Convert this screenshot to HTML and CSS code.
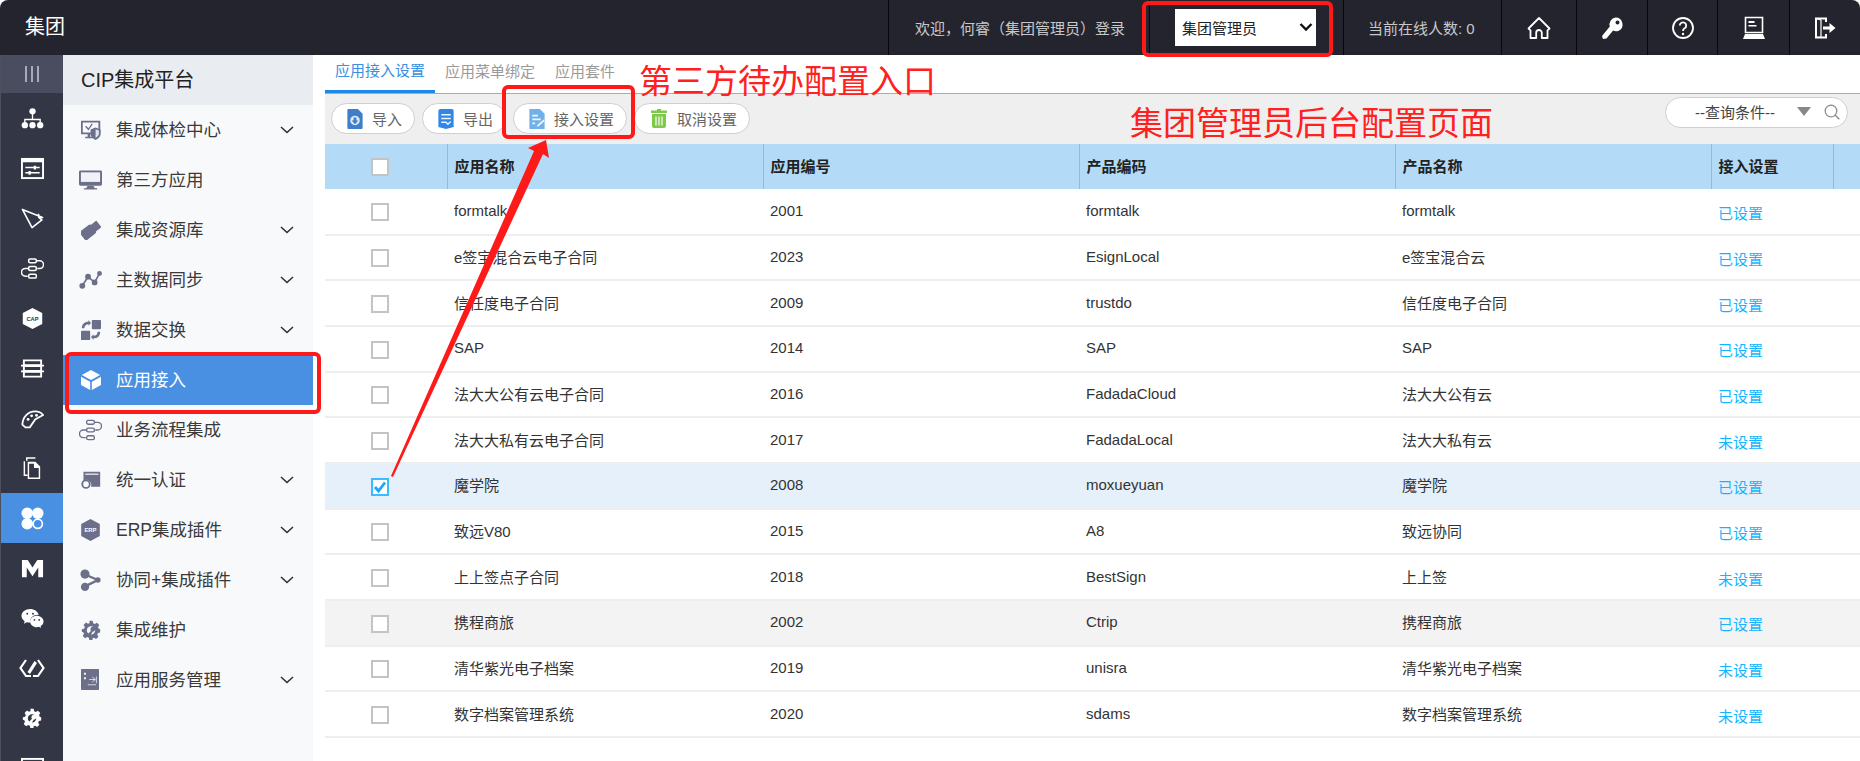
FILE: index.html
```html
<!DOCTYPE html>
<html lang="zh-CN">
<head>
<meta charset="utf-8">
<title>CIP集成平台</title>
<link rel="stylesheet" href="styles.css">
</head>
<body>
<div class="app">
  <header class="top">
    <div class="brand">集团</div>
    <div class="seg seg-welcome">欢迎，何睿（集团管理员）登录</div>
    <div class="seg seg-select">
      <div class="select"><span>集团管理员</span>
        <svg class="sel-arrow" viewBox="0 0 14 10"><path d="M1.500 2 7 7.500 12.500 2" fill="none" stroke="#111" stroke-width="2.400"/></svg>
      </div>
    </div>
    <div class="seg seg-online">当前在线人数: 0</div>
    <div class="seg seg-icon w75"><svg viewBox="0 0 24 24" class="ti"><path d="M1.500 12.500 12 2l10.500 10.500-2 1.800v7.700h-5.700v-5.200a2.800 2.800 0 0 0-5.600 0V22H3.500v-7.700z" fill="none" stroke="#fff" stroke-width="1.800" stroke-linejoin="round"/></svg></div>
    <div class="seg seg-icon w71"><svg viewBox="0 0 24 24" class="ti"><path d="M15.500 1.500a7 7 0 0 1 2.600 13.500 7 7 0 0 1-5-.4L6.500 22.500l-3.500.5-1-3 7.800-9.500a7 7 0 0 1 5.700-9zm2 3a2 2 0 1 0 0 4 2 2 0 0 0 0-4z" fill="#fff" fill-rule="evenodd"/></svg></div>
    <div class="seg seg-icon w70"><svg viewBox="0 0 24 24" class="ti"><circle cx="12" cy="12" r="10" fill="none" stroke="#fff" stroke-width="1.800"/><path d="M8.800 9.500a3.200 3.200 0 1 1 4.800 2.800c-1.100.7-1.600 1.200-1.600 2.700" fill="none" stroke="#fff" stroke-width="1.800"/><circle cx="12" cy="18" r="1.200" fill="#fff"/></svg></div>
    <div class="seg seg-icon w72"><svg viewBox="0 0 24 24" class="ti"><path d="M3.500 1.500h17v15h-17z" fill="none" stroke="#fff" stroke-width="1.600"/><path d="M6.500 5h6v2h-6zM6.500 9h8v1.600h-8z" fill="#fff"/><path d="M3 18h18l2 5H1z" fill="#fff"/></svg></div>
    <div class="seg seg-icon w71"><svg viewBox="0 0 24 24" class="ti"><path d="M13 6V2.500H3v19h10V18" fill="none" stroke="#fff" stroke-width="2"/><path d="M3 2.500 8 4v17l-5 .5" fill="none" stroke="#fff" stroke-width="1.200"/><path d="M10 10.500h6.500V7l6 5-6 5v-3.500H10z" fill="#fff"/></svg></div>
  </header>

  <div class="main">
    <nav class="rail">
      <div class="rail-toggle"><svg viewBox="0 0 16 16" class="ri-small"><path d="M2 0v16M8 0v16M14 0v16" stroke="#d9dcec" stroke-width="1.300"/></svg></div>
      <div class="rail-item"><svg viewBox="0 0 24 22" class="ri"><circle cx="12" cy="3.500" r="3.300" fill="#fff"/><path d="M12 6v6M4 15v-3h16v3" fill="none" stroke="#fff" stroke-width="1.400"/><circle cx="4" cy="18" r="3.300" fill="#fff"/><circle cx="12" cy="18" r="3.300" fill="#fff"/><circle cx="20" cy="18" r="3.300" fill="#fff"/></svg></div>
      <div class="rail-item"><svg viewBox="0 0 24 22" class="ri"><rect x="1" y="1" width="22" height="20" fill="none" stroke="#fff" stroke-width="2"/><rect x="1" y="1" width="22" height="3.500" fill="#fff"/><path d="M4.500 10h15M4.500 15.500h15" stroke="#fff" stroke-width="1.600"/><path d="M14.500 8v4M9 13.500v4" stroke="#fff" stroke-width="2.400"/></svg></div>
      <div class="rail-item"><svg viewBox="0 0 24 24" class="ri"><path d="M1.500 2.500 22.500 11l-4-.2 3.300 2.700L11.500 21.500z" fill="none" stroke="#fff" stroke-width="1.700" stroke-linejoin="round"/><path d="M18 7l1 4" fill="none" stroke="#fff" stroke-width="1.700"/></svg></div>
      <div class="rail-item"><svg viewBox="0 0 24 22" class="ri"><rect x="8" y="1" width="8" height="4" rx="1.500" fill="none" stroke="#fff" stroke-width="1.600"/><rect x="8" y="9" width="8" height="4" rx="1.500" fill="none" stroke="#fff" stroke-width="1.600"/><rect x="8" y="17" width="8" height="4" rx="1.500" fill="none" stroke="#fff" stroke-width="1.600"/><path d="M16 3h3.500a4 4 0 0 1 0 8H17M8 11H4.500a4 4 0 0 0 0 8H7" fill="none" stroke="#fff" stroke-width="1.600"/></svg></div>
      <div class="rail-item"><svg viewBox="0 0 24 26" class="ri"><path d="M12 1 23 6.800v12.400L12 25 1 19.200V6.800z" fill="#fff"/><text x="12" y="15.500" text-anchor="middle" class="cap">CAP</text></svg></div>
      <div class="rail-item"><svg viewBox="0 0 24 22" class="ri"><path d="M3 2.500h18v5H3zM3 8.500h18v5H3zM3 14.500h18v5H3z" fill="none" stroke="#fff" stroke-width="2"/><path d="M0 8h24M0 14h24" stroke="#fff" stroke-width="1.600"/></svg></div>
      <div class="rail-item"><svg viewBox="0 0 26 22" class="ri"><path d="M1.500 18C2 9 8 3 16 3c4 0 7 1.500 9 4l-9 5-6 9H5z" fill="none" stroke="#fff" stroke-width="2"/><circle cx="8" cy="12" r="1.600" fill="#fff"/><circle cx="12" cy="8" r="1.600" fill="#fff"/><circle cx="17.500" cy="7.500" r="1.600" fill="#fff"/></svg></div>
      <div class="rail-item"><svg viewBox="0 0 20 24" class="ri"><path d="M4 4V1h9" fill="none" stroke="#fff" stroke-width="1.500"/><path d="M1.500 4.500V19H5" fill="none" stroke="#fff" stroke-width="1.500"/><path d="M5 5h8l5 5v13H5z" fill="#fff"/><path d="M6.500 7h5v4.500h5V21.500h-10z" fill="#333644"/></svg></div>
      <div class="rail-item is-active"><svg viewBox="0 0 24 24" class="ri"><circle cx="6.500" cy="6.500" r="6" fill="#fff"/><circle cx="17.500" cy="6.500" r="6" fill="#fff"/><circle cx="6.500" cy="17.500" r="6" fill="#fff"/><circle cx="17.500" cy="17.500" r="4.800" fill="none" stroke="#fff" stroke-width="1.800"/></svg></div>
      <div class="rail-item"><svg viewBox="0 0 24 20" class="ri"><path d="M1 1h6l5 8 5-8h6v18h-5V9l-6 9-6-9v10H1z" fill="#fff"/></svg></div>
      <div class="rail-item"><svg viewBox="0 0 24 22" class="ri"><path d="M9.500 1C4.500 1 .5 4.200.5 8.200c0 2.300 1.300 4.300 3.300 5.600l-.8 2.600 3-1.500c1 .3 2 .4 3 .4h.8a6 6 0 0 1-.2-1.500C9.600 10 13 7 17.800 7h.7C17.500 3.500 13.800 1 9.500 1z" fill="#fff"/><path d="M23.500 14c0-3.300-3.300-6-7-6s-7 2.700-7 6 3.300 6 7 6c.8 0 1.500-.1 2.200-.3l2.300 1.300-.6-2.100c1.900-1.200 3.100-2.900 3.100-4.900z" fill="#fff"/><circle cx="6.500" cy="6" r="1" fill="#333644"/><circle cx="12.500" cy="6" r="1" fill="#333644"/><circle cx="14" cy="12.500" r=".9" fill="#333644"/><circle cx="19" cy="12.500" r=".9" fill="#333644"/></svg></div>
      <div class="rail-item"><svg viewBox="0 0 26 20" class="ri-code"><path d="M7 2 1.500 10 7 18h5M19 2l5.500 8-5.500 8h-5" fill="none" stroke="#fff" stroke-width="2.200"/><path d="M15.500 3 8.500 14l2.500 2 7-11z" fill="#fff"/></svg></div>
      <div class="rail-item"><svg viewBox="0 0 24 24" class="ri-gear"><use href="#gear-w"/></svg></div>
      <div class="rail-item"><svg viewBox="0 0 24 22" class="ri"><rect x="1" y="1" width="22" height="20" fill="none" stroke="#fff" stroke-width="2"/></svg></div>
    </nav>

    <aside class="panel">
      <h1 class="panel-title">CIP集成平台</h1>
      <ul class="menu">
        <li class="menu-item"><svg viewBox="0 0 24 24" class="mi"><path d="M1 2h21v14H1z" fill="none" stroke="#6b6f8a" stroke-width="2.200"/><path d="M5 20h9v2H5zM8 16h3v5H8z" fill="#6b6f8a"/><path d="M6 7l3 3 4-6 1 1-5 7.500L5 8z" fill="#6b6f8a"/><path d="M17.500 9l6 2.300v5.200c0 3.800-3 6-6 7.500-3-1.500-6-3.700-6-7.500v-5.200z" fill="#6b6f8a"/><path d="M17.500 11.200v10.300c2-1.200 4-2.800 4-5.200v-3.600z" fill="#dce4f2"/></svg><span>集成体检中心</span><svg viewBox="0 0 14 8" class="chev"><path d="M1 1l6 5.500L13 1" fill="none" stroke="#2d3140" stroke-width="1.600"/></svg></li>
        <li class="menu-item"><svg viewBox="0 0 24 20" class="mi mi-wide"><path d="M1.500 0h21A1.500 1.500 0 0 1 24 1.500v13a1.500 1.500 0 0 1-1.500 1.500h-21A1.500 1.500 0 0 1 0 14.500v-13A1.500 1.500 0 0 1 1.500 0z" fill="#6b6f8a"/><path d="M2 2h20v10H2z" fill="#f0f2f8"/><path d="M9 16h6l1.500 2.500H19V20H5v-1.500h2.500z" fill="#6b6f8a"/></svg><span>第三方应用</span></li>
        <li class="menu-item"><svg viewBox="0 0 24 24" class="mi"><g transform="rotate(-38 12 12)" fill="#6b6f8a"><rect x="-1" y="5.500" width="17" height="13" rx="3"/><rect x="15" y="7" width="9" height="10" rx="1"/></g></svg><span>集成资源库</span><svg viewBox="0 0 14 8" class="chev"><path d="M1 1l6 5.500L13 1" fill="none" stroke="#2d3140" stroke-width="1.600"/></svg></li>
        <li class="menu-item"><svg viewBox="0 0 28 22" class="mi mi-wide"><path d="M4 18l7-11 8 7 6-11" fill="none" stroke="#6b6f8a" stroke-width="2"/><circle cx="4" cy="18" r="3.500" fill="#6b6f8a"/><circle cx="11" cy="7" r="3.500" fill="#6b6f8a"/><circle cx="19" cy="14" r="3.500" fill="#6b6f8a"/><circle cx="25" cy="3" r="3" fill="#6b6f8a"/></svg><span>主数据同步</span><svg viewBox="0 0 14 8" class="chev"><path d="M1 1l6 5.500L13 1" fill="none" stroke="#2d3140" stroke-width="1.600"/></svg></li>
        <li class="menu-item"><svg viewBox="0 0 24 24" class="mi"><rect x="13" y="0" width="11" height="11" rx="1" fill="#6b6f8a"/><rect x="0" y="13" width="11" height="11" rx="1" fill="#6b6f8a"/><path d="M1 10c0-5 3-8 8-8V0l3 3.500L9 7V5c-3 0-5 2-5 5z" fill="#6b6f8a"/><path d="M23 14c0 5-3 8-8 8v2l-3-3.500 3-3.500v2c3 0 5-2 5-5z" fill="#6b6f8a"/></svg><span>数据交换</span><svg viewBox="0 0 14 8" class="chev"><path d="M1 1l6 5.500L13 1" fill="none" stroke="#2d3140" stroke-width="1.600"/></svg></li>
        <li class="menu-item is-active"><svg viewBox="0 0 24 24" class="mi"><path d="M12 0 23 6 12 12 1 6z" fill="#fff"/><path d="M0 8l11 6v10L0 18z" fill="#fff"/><path d="M24 8l-11 6v10l11-6z" fill="#fff"/></svg><span>应用接入</span></li>
        <li class="menu-item"><svg viewBox="0 0 24 22" class="mi mi-wide"><rect x="8" y="1" width="8" height="4" rx="1.500" fill="none" stroke="#6b6f8a" stroke-width="1.400"/><rect x="8" y="9" width="8" height="4" rx="1.500" fill="none" stroke="#6b6f8a" stroke-width="1.400"/><rect x="8" y="17" width="8" height="4" rx="1.500" fill="none" stroke="#6b6f8a" stroke-width="1.400"/><path d="M16 3h3.500a4 4 0 0 1 0 8H17M8 11H4.500a4 4 0 0 0 0 8H7" fill="none" stroke="#6b6f8a" stroke-width="1.400"/></svg><span>业务流程集成</span></li>
        <li class="menu-item"><svg viewBox="0 0 24 22" class="mi"><path d="M3 1h20v18H12a6 6 0 0 0-9-7z" fill="#6b6f8a"/><path d="M5 4h16" stroke="#f8f9fb" stroke-width="1.400"/><circle cx="6" cy="16" r="4.500" fill="none" stroke="#6b6f8a" stroke-width="2.200"/></svg><span>统一认证</span><svg viewBox="0 0 14 8" class="chev"><path d="M1 1l6 5.500L13 1" fill="none" stroke="#2d3140" stroke-width="1.600"/></svg></li>
        <li class="menu-item"><svg viewBox="0 0 24 26" class="mi mi-wide"><path d="M12 0 23 6v14l-11 6L1 20V6z" fill="#6b6f8a"/><text x="12" y="15.500" text-anchor="middle" class="erp">ERP</text></svg><span>ERP集成插件</span><svg viewBox="0 0 14 8" class="chev"><path d="M1 1l6 5.500L13 1" fill="none" stroke="#2d3140" stroke-width="1.600"/></svg></li>
        <li class="menu-item"><svg viewBox="0 0 24 24" class="mi mi-wide"><path d="M6 6l14 6L6 19" fill="none" stroke="#6b6f8a" stroke-width="2.600"/><circle cx="6" cy="5.500" r="5" fill="#6b6f8a"/><circle cx="6" cy="19.500" r="4.500" fill="#6b6f8a"/><circle cx="20" cy="12" r="3" fill="#6b6f8a"/></svg><span>协同+集成插件</span><svg viewBox="0 0 14 8" class="chev"><path d="M1 1l6 5.500L13 1" fill="none" stroke="#2d3140" stroke-width="1.600"/></svg></li>
        <li class="menu-item"><svg viewBox="0 0 24 24" class="mi"><use href="#gear-g"/></svg><span>集成维护</span></li>
        <li class="menu-item"><svg viewBox="0 0 24 28" class="mi mi-tall"><rect x="0" y="0" width="24" height="28" rx="1" fill="#6b6f8a"/><path d="M4 5h2.500v2.500H4zM4 11h2.500v2.500H4z" fill="#f8f9fb"/><path d="M11 14h8M15 10.500 19 14l-4 3.500M20.500 10v9M9 21h11" fill="none" stroke="#f8f9fb" stroke-width="1"/></svg><span>应用服务管理</span><svg viewBox="0 0 14 8" class="chev"><path d="M1 1l6 5.500L13 1" fill="none" stroke="#2d3140" stroke-width="1.600"/></svg></li>
      </ul>
    </aside>

    <main class="content">
      <div class="tabs">
        <div class="tab is-current">应用接入设置</div>
        <div class="tab">应用菜单绑定</div>
        <div class="tab">应用套件</div>
      </div>
      <div class="toolbar">
        <button class="btn"><svg viewBox="0 0 16 21" class="bi"><path d="M1 0h10l5 5v15a1 1 0 0 1-1 1H1a1 1 0 0 1-1-1V1a1 1 0 0 1 1-1z" fill="#3f7fc9"/><circle cx="8" cy="12" r="5" fill="#dfe9f5"/><path d="M6.500 9h3v3h2L8 16l-3.500-4h2z" fill="#3f7fc9"/></svg>导入</button>
        <button class="btn"><svg viewBox="0 0 16 21" class="bi"><path d="M2 0h12a2 2 0 0 1 2 2v17l-8 2-8-2V2a2 2 0 0 1 2-2z" fill="#2f87e6"/><path d="M3 6h10M3 10h10M3 14h5l2 2 3-3" fill="none" stroke="#eef4fb" stroke-width="1.500"/></svg>导出</button>
        <button class="btn"><svg viewBox="0 0 16 21" class="bi"><path d="M0 0h11l5 5v16H0z" fill="#6fb1e8"/><path d="M3 7h6M3 11h9M3 15h3" stroke="#eef4fb" stroke-width="1.800"/><path d="M8 17l7-6 1 1.500L9.500 18.500H8z" fill="#eef4fb"/></svg>接入设置</button>
        <button class="btn"><svg viewBox="0 0 18 19" class="bi bi-wide"><path d="M7 0h4v1.500h6V4H1V1.500h6z" fill="#7fc94a"/><path d="M2 5h14v12a2 2 0 0 1-2 2H4a2 2 0 0 1-2-2z" fill="#7fc94a"/><path d="M6 7.500v9M9 7.500v9M12 7.500v9" stroke="#f3f9ec" stroke-width="1.300"/></svg>取消设置</button>
        <div class="search"><span class="search-text">--查询条件--</span><i class="tri"></i><svg viewBox="0 0 16 16" class="mag"><circle cx="7" cy="7" r="5.800" fill="none" stroke="#8e8e8e" stroke-width="1.300"/><path d="M11 11l4.300 4.300" stroke="#8e8e8e" stroke-width="1.500"/></svg></div>
      </div>
      <table class="grid">
        <colgroup><col class="c-check"><col class="c-data"><col class="c-data"><col class="c-data"><col class="c-data"><col class="c-set"><col></colgroup>
        <thead>
          <tr><th class="cell-head-check"><i class="box"></i></th><th>应用名称</th><th>应用编号</th><th>产品编码</th><th>产品名称</th><th>接入设置</th><th></th></tr>
        </thead>
        <tbody>
          <tr><td class="cell-check"><i class="box"></i></td><td>formtalk</td><td>2001</td><td>formtalk</td><td>formtalk</td><td><a class="link">已设置</a></td><td></td></tr>
          <tr><td class="cell-check"><i class="box"></i></td><td>e签宝混合云电子合同</td><td>2023</td><td>EsignLocal</td><td>e签宝混合云</td><td><a class="link">已设置</a></td><td></td></tr>
          <tr><td class="cell-check"><i class="box"></i></td><td>信任度电子合同</td><td>2009</td><td>trustdo</td><td>信任度电子合同</td><td><a class="link">已设置</a></td><td></td></tr>
          <tr><td class="cell-check"><i class="box"></i></td><td>SAP</td><td>2014</td><td>SAP</td><td>SAP</td><td><a class="link">已设置</a></td><td></td></tr>
          <tr><td class="cell-check"><i class="box"></i></td><td>法大大公有云电子合同</td><td>2016</td><td>FadadaCloud</td><td>法大大公有云</td><td><a class="link">已设置</a></td><td></td></tr>
          <tr><td class="cell-check"><i class="box"></i></td><td>法大大私有云电子合同</td><td>2017</td><td>FadadaLocal</td><td>法大大私有云</td><td><a class="link">未设置</a></td><td></td></tr>
          <tr class="row-selected"><td class="cell-check"><i class="box box-on"><svg viewBox="0 0 14 14"><path d="M2 7l3.500 4L12 2.500" fill="none" stroke="#1aa7f5" stroke-width="2.800"/></svg></i></td><td>魔学院</td><td>2008</td><td>moxueyuan</td><td>魔学院</td><td><a class="link">已设置</a></td><td></td></tr>
          <tr><td class="cell-check"><i class="box"></i></td><td>致远V80</td><td>2015</td><td>A8</td><td>致远协同</td><td><a class="link">已设置</a></td><td></td></tr>
          <tr><td class="cell-check"><i class="box"></i></td><td>上上签点子合同</td><td>2018</td><td>BestSign</td><td>上上签</td><td><a class="link">未设置</a></td><td></td></tr>
          <tr class="row-hover"><td class="cell-check"><i class="box"></i></td><td>携程商旅</td><td>2002</td><td>Ctrip</td><td>携程商旅</td><td><a class="link">已设置</a></td><td></td></tr>
          <tr><td class="cell-check"><i class="box"></i></td><td>清华紫光电子档案</td><td>2019</td><td>unisra</td><td>清华紫光电子档案</td><td><a class="link">未设置</a></td><td></td></tr>
          <tr><td class="cell-check"><i class="box"></i></td><td>数字档案管理系统</td><td>2020</td><td>sdams</td><td>数字档案管理系统</td><td><a class="link">未设置</a></td><td></td></tr>
        </tbody>
      </table>
    </main>
  </div>
</div>

<svg class="defs" aria-hidden="true">
  <defs>
    <g id="gear-w"><path d="M10 1h4l.6 2.800 2 .9 2.500-1.500 2.800 2.800-1.500 2.500.9 2L23 11v4l-2.700.6-.9 2 1.500 2.500-2.800 2.800-2.500-1.500-2 .9L14 24h-4l-.6-2.700-2-.9-2.500 1.500-2.800-2.800 1.500-2.500-.9-2L1 14v-3l2.700-.6.9-2-1.500-2.500 2.800-2.800 2.500 1.500 2-.9z" fill="#fff"/><circle cx="12" cy="12.500" r="5" fill="#333644"/><path d="M8 17l4-4a3 3 0 1 1 2 1l-3 5z" fill="#fff"/></g>
    <g id="gear-g"><path d="M10 1h4l.6 2.800 2 .9 2.500-1.500 2.800 2.800-1.500 2.500.9 2L23 11v4l-2.700.6-.9 2 1.500 2.500-2.800 2.800-2.500-1.500-2 .9L14 24h-4l-.6-2.700-2-.9-2.500 1.500-2.800-2.800 1.500-2.500-.9-2L1 14v-3l2.700-.6.9-2-1.500-2.500 2.800-2.800 2.500 1.500 2-.9z" fill="#6b6f8a"/><circle cx="12" cy="12.500" r="5" fill="#f8f9fb"/><path d="M8 17l4-4a3 3 0 1 1 2 1l-3 5z" fill="#6b6f8a"/></g>
  </defs>
</svg>

<div class="mark mark-select"></div>
<div class="mark mark-menu"></div>
<div class="mark mark-btn"></div>
<div class="note note-entry">第三方待办配置入口</div>
<div class="note note-page">集团管理员后台配置页面</div>
<svg class="arrow" viewBox="0 0 1860 761"><polygon points="546,140 549,158 543,154 393,477 391,476 534,151 528,148" fill="#ff1a1a"/></svg>
</body>
</html>
```

FILE: styles.css
```css
* { box-sizing: border-box; }
html, body { margin: 0; height: 100%; overflow: hidden; background: #fff; }
body {
  position: relative;
  font-family: "Liberation Sans", "Noto Sans CJK SC", sans-serif;
  font-size: 15px;
  color: #333;
}
ul { list-style: none; margin: 0; padding: 0; }
h1 { margin: 0; font-weight: normal; }

.app { display: flex; flex-direction: column; height: 761px; }

/* top bar */
.top {
  flex: 0 0 55px;
  display: flex;
  background: #24242e;
  border-radius: 8px 8px 0 0;
  color: #c8c8c8;
}
.brand { flex: 1; padding-left: 25px; font-size: 20px; line-height: 54px; color: #fff; }
.seg { display: flex; align-items: center; border-left: 1px solid #08080c; height: 55px; }
.seg-welcome { width: 261px; padding-left: 26px; }
.seg-select { width: 194px; padding-left: 25px; }
.seg-online { width: 158px; padding-left: 24px; }
.select {
  width: 141px; height: 37px; margin-top: -1px;
  display: flex; align-items: center; justify-content: space-between;
  padding: 0 3px 0 7px;
  background: #fff; color: #222;
}
.sel-arrow { width: 14px; height: 10px; margin-right: 0; }
.seg-icon { justify-content: center; }
.w75 { width: 75px; } .w71 { width: 71px; } .w70 { width: 70px; } .w72 { width: 72px; }
.ti { width: 24px; height: 24px; }

/* layout */
.main { flex: 1; display: flex; min-height: 0; overflow: hidden; }

/* icon rail */
.rail { flex: 0 0 63px; background: #333644; border-left: 1px solid #4d505c; overflow: hidden; }
.rail-toggle { height: 38px; display: flex; align-items: center; justify-content: center; background: #4a4d5f; }
.rail-item { height: 50px; display: flex; align-items: center; justify-content: center; }
.rail-item.is-active { background: #4a90e2; }
.ri { width: 23px; height: 23px; }
.ri-code { width: 26px; height: 20px; }
.ri-gear { width: 20px; height: 20px; }
.ri-small { width: 16px; height: 16px; }
.cap { font: bold 6.500px "Liberation Sans", sans-serif; fill: #333644; }
.erp { font: bold 7px "Liberation Sans", sans-serif; fill: #f8f9fb; }

/* menu panel */
.panel { flex: 0 0 250px; background: #f8f9fb; }
.panel-title { height: 50px; padding-left: 18px; font-size: 20px; line-height: 50px; background: #e9edf1; color: #222; }
.menu-item {
  position: relative;
  height: 50px;
  display: flex; align-items: center;
  padding: 0 0 3px 53px;
  font-size: 17.500px;
  color: #3a3a3a;
}
.menu-item.is-active { background: #4a90e2; color: #fff; }
.mi { position: absolute; left: 18px; top: 15px; width: 20px; height: 20px; }
.mi-wide { left: 16px; top: 14px; width: 23px; height: 22px; }
.mi-tall { left: 18px; top: 14px; width: 18px; height: 21px; }
.chev { position: absolute; left: 217px; top: 21px; width: 14px; height: 8px; }

/* content */
.content { flex: 1; min-width: 0; margin-left: 12px; background: #fff; }
.tabs { height: 39px; display: flex; border-bottom: 1px solid #7ab8ec; }
.tab { height: 38px; padding: 7px 10px 0; width: 110px; line-height: 20px; color: #9a9a9a; white-space: nowrap; }
.tab.is-current { color: #3a8fe0; border-bottom: 3px solid #1e88e5; padding-top: 6px; }
.toolbar { height: 50px; display: flex; align-items: flex-start; gap: 7px; padding: 9px 12px 0 6px; background: #efefef; }
.btn {
  height: 31px;
  display: flex; align-items: center; gap: 9px;
  padding: 0 12px 0 15px;
  background: #fff;
  border: 1px solid #cfcfcf;
  border-radius: 16px;
  font: inherit;
  color: #666;
}
.bi { width: 16px; height: 20px; }
.bi-wide { width: 18px; height: 19px; }
.search {
  position: relative;
  width: 183px; height: 31px;
  margin: -6px 0 0 auto;
  background: #fff;
  border: 1px solid #cfcfcf;
  border-radius: 16px;
  line-height: 29px;
  padding-left: 29px;
  color: #444;
}
.tri { position: absolute; left: 131px; top: 9px; border: 7px solid transparent; border-top: 9px solid #888; border-bottom: 0; }
.mag { position: absolute; left: 158px; top: 6px; width: 16px; height: 16px; }

/* table */
.grid { width: 100%; table-layout: fixed; border-collapse: collapse; }
.c-check { width: 122px; }
.c-data { width: 316px; }
.c-set { width: 122px; }
.grid th {
  height: 45px;
  padding: 0 0 2px 7px;
  text-align: left;
  font-weight: bold;
  color: #222;
  background: #b3dbf7;
  border-right: 1px solid #9fb6cc;
}
.grid th:last-child { border-right: 0; }
.grid td {
  height: 45.670px;
  padding: 0 0 2px 7px;
  border-bottom: 2px solid #eeeeee;
  color: #333;
  white-space: nowrap;
}
.grid .cell-head-check { padding: 0 0 0 46px; }
.grid .cell-check { padding: 2px 0 0 46px; }
.box { display: block; width: 18px; height: 18px; background: #fff; border: 2px solid #c4c4c4; }
.box-on { border-color: #3cbcff; }
.box-on svg { display: block; width: 14px; height: 14px; }
.link { color: #13b5ff; position: relative; top: 2px; }
.row-selected td { background: #e6f0fa; }
.row-hover td { background: #f3f3f3; }

/* annotations drawn over the screenshot */
.defs { position: absolute; width: 0; height: 0; }
.mark { position: absolute; border: 4px solid #ff1a1a; border-radius: 6px; }
.mark-select { left: 1142px; top: 1px; width: 191px; height: 56px; }
.mark-menu { left: 65px; top: 352px; width: 256px; height: 62px; }
.mark-btn { left: 502px; top: 85px; width: 133px; height: 54px; }
.note { position: absolute; font-size: 33px; line-height: 40px; color: #ff2020; white-space: nowrap; }
.note-entry { left: 639px; top: 62px; }
.note-page { left: 1130px; top: 104px; }
.arrow { position: absolute; left: 0; top: 0; width: 1860px; height: 761px; pointer-events: none; }
```
